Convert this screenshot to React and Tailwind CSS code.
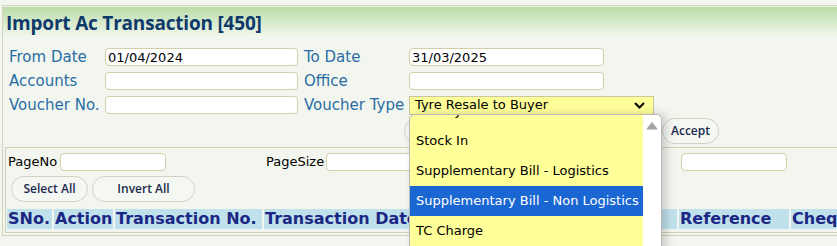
import React from 'react';

const labelCls = 'text-[15px] text-[#2a6da5] leading-none';
const inputCls = 'h-[18px] rounded-[4px] border border-[#d3cfa8] bg-white px-[2px] text-[13px] leading-none text-black outline-none';

const FormRow = ({ label, value, label2, value2, select }) => (
  <div className="flex items-center h-[24px]">
    <span className={`${labelCls} w-[96px] whitespace-nowrap`}>{label}</span>
    <input className={`${inputCls} w-[193px]`} defaultValue={value} />
    <span className={`${labelCls} ml-[6px] w-[105px] whitespace-nowrap`}>{label2}</span>
    {select ? (
      <div className="flex items-center justify-between h-[19px] w-[245px] border border-[#c9c79d] bg-[#ffff99] pl-[5px] pr-[8px] text-[13px] text-black">
        <span>{value2}</span>
        <svg width="11" height="7" viewBox="0 0 11 7">
          <path d="M1 1l4.5 4.5L10 1" fill="none" stroke="#000" strokeWidth="2" />
        </svg>
      </div>
    ) : (
      <input className={`${inputCls} w-[195px]`} defaultValue={value2} />
    )}
  </div>
);

const PillButton = ({ children, w }) => (
  <button className={`h-[26px] ${w} shrink-0 rounded-full border border-[#d2d2c4] bg-[#f5f8f2] text-[12px] font-semibold text-[#1b2a4e]`} style={{ fontFamily: '"Open Sans", sans-serif' }}>
    {children}
  </button>
);

const options = [
  'Stock Journal',
  'Stock In',
  'Supplementary Bill - Logistics',
  'Supplementary Bill - Non Logistics',
  'TC Charge',
];

const headers = [
  ['SNo.', 'w-[45px]'],
  ['Action', 'w-[59px]'],
  ['Transaction No.', 'w-[147px]'],
  ['Transaction Date', 'w-[413px]'],
  ['Reference', 'w-[110px]'],
  ['Cheque No.', 'w-[110px]'],
];

export default function App() {
  return (
    <div className="relative h-[246px] w-[837px] overflow-hidden bg-[#f2f6ee]" style={{ fontFamily: '"DejaVu Sans", Verdana, sans-serif' }}>
      <div className="ml-[2px] mt-[5px] h-[231px] border-l border-t border-b border-[#d4d4bc]">
        <div className="h-[30px] bg-gradient-to-b from-[#b9dca9] to-[#f1f6ec] border-t border-[#eef3e8] pl-[3px] pt-[7px]">
          <h1 className="text-[19px] font-bold leading-none text-[#0e3a6b] tracking-[-0.2px]" style={{ fontFamily: '"Open Sans", sans-serif' }}>
            Import Ac Transaction [450]
          </h1>
        </div>
        <div className="pl-[6px] pt-[9px]">
          <FormRow label="From Date" value="01/04/2024" label2="To Date" value2="31/03/2025" />
          <FormRow label="Accounts" value="" label2="Office" value2="" />
          <FormRow label="Voucher No." value="" label2="Voucher Type" value2="Tyre Resale to Buyer" select />
        </div>
        <div className="flex gap-[4px] pl-[401px] mt-[1px] h-[26px]">
          <PillButton w="w-[122px]"></PillButton>
          <PillButton w="w-[128px]"></PillButton>
          <PillButton w="w-[57px]">Accept</PillButton>
        </div>
        <div className="ml-[2px] mt-[3px] h-[86px] border-l border-t border-b border-[#cfcfb4] pl-[2px]">
          <div className="flex items-center h-[22px] mt-[3px] text-[13px] text-black">
            <span className="w-[52px]">PageNo</span>
            <input className={`${inputCls} w-[106px]`} />
            <span className="ml-[100px] w-[60px]">PageSize</span>
            <input className={`${inputCls} w-[106px]`} />
            <input className={`${inputCls} ml-[249px] w-[106px] bg-[#f2f6ee]`} />
          </div>
          <div className="flex gap-[4px] mt-[3px] pl-[3px]">
            <PillButton w="w-[77px]">Select All</PillButton>
            <PillButton w="w-[103px]">Invert All</PillButton>
          </div>
          <div className="flex gap-[2px] mt-[7px] -ml-[1px]">
            {headers.map(([h, w]) => (
              <div key={h} className={`${w} shrink-0 h-[20px] bg-[#c0e1ec] px-[1px] text-[16px] font-bold leading-[20px] text-[#1b2784] whitespace-nowrap overflow-hidden`}>
                {h}
              </div>
            ))}
          </div>
        </div>
      </div>

      <div className="absolute left-[409px] top-[114px] h-[140px] w-[253px] overflow-hidden rounded-tl-[6px] rounded-tr-[6px] border border-[#b9b9b9] bg-[#ffff99] shadow-[4px_0_10px_rgba(0,0,0,0.18)]">
        <div className="flex h-full">
          <div className="w-[234px] -mt-[19px]">
            {options.map((o) => (
              <div key={o} className={`h-[30px] pl-[6px] text-[13px] leading-[30px] whitespace-nowrap ${o === 'Supplementary Bill - Non Logistics' ? 'bg-[#1a66d2] text-white' : 'text-black'}`}>
                {o}
              </div>
            ))}
          </div>
          <div className="w-[18px] bg-white flex justify-center pt-[6px]">
            <svg width="12" height="9" viewBox="0 0 12 9">
              <path d="M1 8L6 1.5L11 8Z" fill="#a3a3a3" stroke="#a3a3a3" strokeLinejoin="round" />
            </svg>
          </div>
        </div>
      </div>
    </div>
  );
}
